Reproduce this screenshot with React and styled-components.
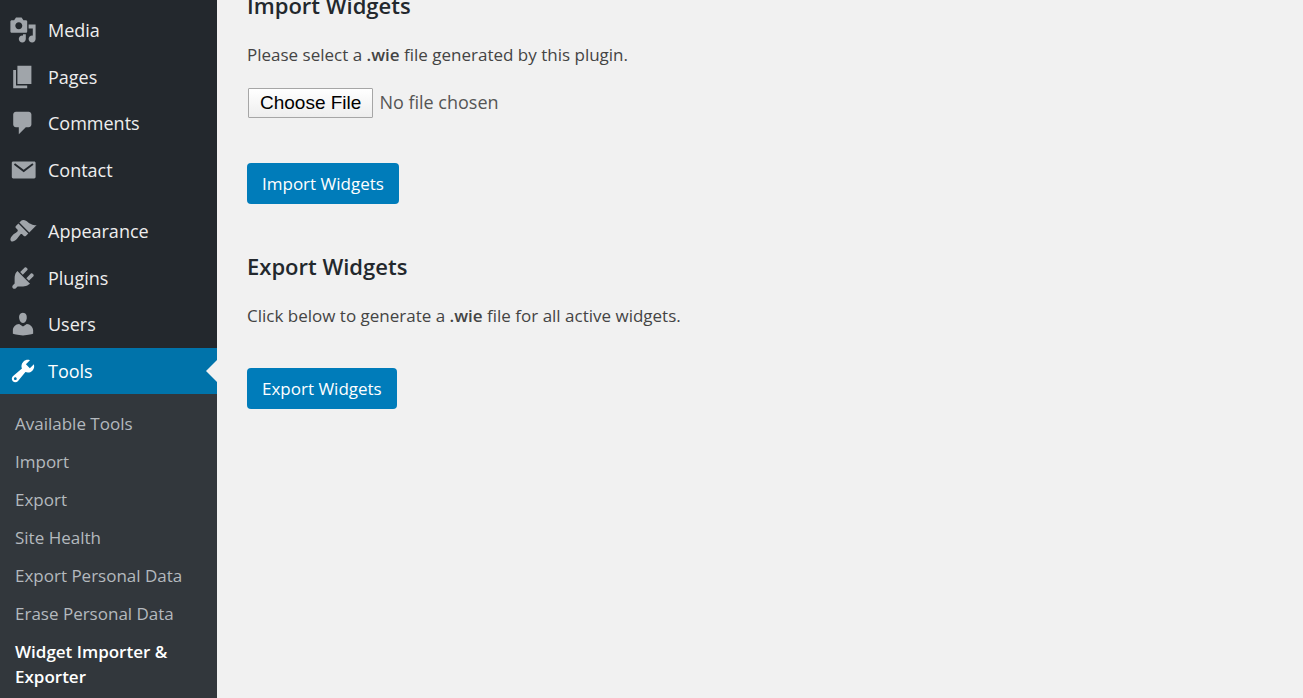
import React, { useState } from "react";
import styled, { createGlobalStyle } from "styled-components";

const GlobalStyle = createGlobalStyle`
  * {
    box-sizing: border-box;
  }
  body {
    margin: 0;
    background-color: #f1f1f1;
    color: #444;
    font-family: "Open Sans", "Noto Sans", sans-serif;
    font-size: 17px;
  }
`;

const icons = {
  media:
    "M13 11V4c0-.55-.45-1-1-1h-1.67L9 1H5L3.67 3H2c-.55 0-1 .45-1 1v7c0 .55.45 1 1 1h10c.55 0 1-.45 1-1zM7 4.5c1.38 0 2.5 1.12 2.5 2.5S8.38 9.5 7 9.5 4.5 8.38 4.5 7 5.62 4.5 7 4.5zM14 6h5v10.5c0 1.38-1.12 2.5-2.5 2.5S14 17.88 14 16.5s1.12-2.5 2.5-2.5c.17 0 .34.02.5.05V9h-3V6zm-4 8.05V13h2v3.5c0 1.38-1.12 2.5-2.5 2.5S7 17.88 7 16.5 8.12 14 9.5 14c.17 0 .34.02.5.05z",
  pages: "M6 15V2h10v13H6zm-1 1h8v2H3V5h2v11z",
  comments:
    "M5 2h9c1.1 0 2 .9 2 2v7c0 1.1-.9 2-2 2h-2l-5 5v-5H5c-1.1 0-2-.9-2-2V4c0-1.1.9-2 2-2z",
  contact:
    "M3 4h15c.55 0 1 .45 1 1v10c0 .55-.45 1-1 1H3c-.55 0-1-.45-1-1V5c0-.55.45-1 1-1zm7.5 7.6l7-5.3-.8-1.1-6.2 4.7-6.2-4.7-.8 1.1z",
  appearance:
    "M14.48 11.06L7.41 3.99l1.5-1.5c.5-.56 2.3-.47 3.51.32 1.21.8 1.43 1.28 2.91 2.1 1.18.64 2.45 1.26 4.45.85zm-.71.71L6.7 4.7 4.93 6.47c-.39.39-.39 1.02 0 1.41l1.06 1.06c.39.39.39 1.03 0 1.42-.6.6-1.43 1.11-2.21 1.69-.35.26-.7.53-1.01.84C1.43 14.23.4 16.08 1.4 17.07c.99 1 2.84-.03 4.18-1.36.31-.31.58-.66.85-1.02.57-.78 1.08-1.61 1.69-2.21.39-.39 1.02-.39 1.41 0l1.06 1.06c.39.39 1.02.39 1.41 0z",
  plugins:
    "M13.11 4.36L9.87 7.6 8 5.73l3.24-3.24c.35-.34 1.05-.2 1.56.32.52.51.66 1.21.31 1.55zm-8 1.77l.91-1.12 9.01 9.01-1.19.84c-.71.71-2.63 1.16-3.82 1.16H6.14L4.9 17.26c-.59.59-1.54.59-2.12 0-.59-.58-.59-1.53 0-2.12l1.24-1.24v-3.88c0-1.13.4-3.19 1.09-3.89zm7.26 3.97l3.24-3.24c.34-.35 1.04-.21 1.55.31.52.51.66 1.21.31 1.55l-3.24 3.25z",
  users:
    "M10 9.25c-2.27 0-2.73-3.44-2.73-3.44C7 4.02 7.82 2 9.97 2c2.16 0 2.98 2.02 2.71 3.81 0 0-.41 3.44-2.68 3.44zm0 2.57L12.72 10c2.39 0 4.52 2.33 4.52 4.53v2.49s-3.65 1.13-7.24 1.13c-3.65 0-7.24-1.13-7.24-1.13v-2.49c0-2.25 1.94-4.48 4.47-4.48z",
  tools:
    "M16.68 9.77c-1.34 1.34-3.3 1.67-4.95.99l-5.41 6.52c-.99.99-2.59.99-3.58 0s-.99-2.59 0-3.57l6.52-5.42c-.68-1.65-.35-3.61.99-4.95 1.28-1.28 3.12-1.62 4.72-1.06l-2.89 2.89 2.82 2.82 2.86-2.87c.53 1.58.18 3.39-1.08 4.65zM3.81 16.21c.4.39 1.04.39 1.43 0 .4-.4.4-1.04 0-1.43-.39-.4-1.03-.4-1.43 0-.39.39-.39 1.03 0 1.43z",
};

const menuGroups = [
  [
    { icon: "media", label: "Media" },
    { icon: "pages", label: "Pages" },
    { icon: "comments", label: "Comments" },
    { icon: "contact", label: "Contact" },
  ],
  [
    { icon: "appearance", label: "Appearance" },
    { icon: "plugins", label: "Plugins" },
    { icon: "users", label: "Users" },
    { icon: "tools", label: "Tools" },
  ],
];

const toolsMenu = [
  "Available Tools",
  "Import",
  "Export",
  "Site Health",
  "Export Personal Data",
  "Erase Personal Data",
  "Widget Importer & Exporter",
];

const Container = styled.div`
  display: flex;
  min-height: 100vh;
`;

const Sidebar = styled.nav`
  width: 217px;
  flex-shrink: 0;
  display: flex;
  flex-direction: column;
  padding-top: 7px;
  background-color: #23282d;
`;

const MenuGroup = styled.ul`
  height: 186px;
  display: grid;
  grid-template-rows: repeat(4, 1fr);
  margin: 0;
  padding: 0;
  list-style: none;

  & + & {
    margin-top: 15px;
  }
`;

const MenuLink = styled.a`
  position: relative;
  height: 100%;
  display: flex;
  align-items: center;
  gap: 11px;
  padding-left: 9px;
  font-size: 18px;
  text-decoration: none;
  color: ${(props) => (props.$active ? "#fff" : "#eee")};
  background-color: ${(props) => (props.$active ? "#0073aa" : "transparent")};

  &::after {
    content: "";
    display: ${(props) => (props.$active ? "block" : "none")};
    position: absolute;
    right: 0;
    border: 11px solid transparent;
    border-left-width: 0;
    border-right-color: #f1f1f1;
  }
`;

const MenuIcon = styled.svg`
  width: 28px;
  height: 28px;
  fill: ${(props) => (props.$active ? "#fff" : "#a0a5aa")};
`;

const SubMenu = styled.ul`
  flex: 1;
  margin: 0;
  padding: 11px 0 0;
  list-style: none;
  background-color: #32373c;
`;

const SubLink = styled.a`
  display: block;
  padding: 6px 15px 7px;
  font-size: 17px;
  line-height: 25px;
  text-decoration: none;
  font-weight: ${(props) => (props.$active ? 600 : 400)};
  color: ${(props) => (props.$active ? "#fff" : "#b4b9be")};
`;

const Content = styled.main`
  flex: 1;
  padding: 0 30px;
`;

const Section = styled.section`
  display: flex;
  flex-direction: column;
  align-items: flex-start;

  &:first-child {
    margin-top: -11px;
  }
  & + & {
    margin-top: 46px;
  }
`;

const Title = styled.h2`
  margin: 0;
  font-size: 22px;
  font-weight: 600;
  line-height: 32px;
  color: #23282d;
`;

const Desc = styled.p`
  margin: 22px 0 0;
  font-size: 17px;
  line-height: 24px;
`;

const Strong = styled.strong`
  font-weight: 600;
`;

const FileInput = styled.input`
  margin: 20px 0 5px 1px;
  font-family: inherit;
  font-size: 18px;
  line-height: 30px;
  color: #555;

  &::file-selector-button {
    height: 30px;
    margin: 0 6px 0 0;
    padding: 0 11px;
    border: 1px solid #a6a6a6;
    border-radius: 1px;
    background: linear-gradient(#fff, #eee);
    color: #000;
    font-family: "Liberation Sans", Arial, sans-serif;
    font-size: 19px;
  }
`;

const Button = styled.button`
  height: 41px;
  margin-top: 40px;
  padding: 0 15px;
  border: none;
  border-radius: 4px;
  background-color: #007cba;
  color: #fff;
  font-family: inherit;
  font-size: 17px;
  cursor: pointer;
`;

const Menu = () => {
  const [current, setCurrent] = useState("Tools");

  return (
    <Sidebar>
      {menuGroups.map((group) => (
        <MenuGroup key={group[0].label}>
          {group.map((item) => (
            <li key={item.label}>
              <MenuLink
                href="#"
                $active={item.label === current}
                onClick={() => setCurrent(item.label)}
              >
                <MenuIcon
                  viewBox="0 0 20 20"
                  aria-hidden="true"
                  $active={item.label === current}
                >
                  <path fillRule="evenodd" d={icons[item.icon]} />
                </MenuIcon>
                {item.label}
              </MenuLink>
            </li>
          ))}
        </MenuGroup>
      ))}
      <SubMenu>
        {toolsMenu.map((label, i) => (
          <li key={label}>
            <SubLink href="#" $active={i === toolsMenu.length - 1}>
              {label}
            </SubLink>
          </li>
        ))}
      </SubMenu>
    </Sidebar>
  );
};

const App = () => {
  return (
    <>
      <GlobalStyle />
      <Container>
        <Menu />
        <Content>
          <Section>
            <Title>Import Widgets</Title>
            <Desc as="label" htmlFor="wie-file">
              Please select a <Strong>.wie</Strong> file generated by this
              plugin.
            </Desc>
            <FileInput id="wie-file" type="file" accept=".wie" />
            <Button type="button">Import Widgets</Button>
          </Section>
          <Section>
            <Title>Export Widgets</Title>
            <Desc>
              Click below to generate a <Strong>.wie</Strong> file for all
              active widgets.
            </Desc>
            <Button type="button">Export Widgets</Button>
          </Section>
        </Content>
      </Container>
    </>
  );
};

export default App;
